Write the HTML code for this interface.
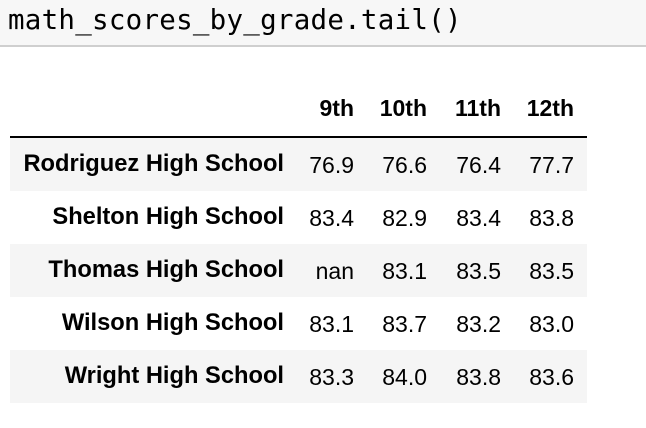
<!DOCTYPE html>
<html><head><meta charset="utf-8"><style>
body{margin:0;width:646px;height:428px;background:#fff;position:relative;overflow:hidden;font-family:"Liberation Sans",Arial,sans-serif;}
.code{position:absolute;left:0;top:0;width:646px;height:45px;background:#f7f7f7;border-bottom:2px solid #cfcfcf;}
.code span{position:absolute;left:8px;top:4px;font-family:"DejaVu Sans Mono","Liberation Mono",monospace;font-size:27.5px;letter-spacing:0.25px;color:#000;white-space:nowrap;line-height:32px;}
.row{position:absolute;left:10px;width:577px;height:53px;}
.g{background:#f5f5f5;}
.t{position:absolute;font-size:23px;line-height:23px;color:#000;white-space:nowrap;}
.b{font-weight:bold;font-size:23.7px;}
.hl{position:absolute;left:10px;top:136px;width:577px;height:2px;background:#000;}
</style></head><body>
<div class="code"><span>math_scores_by_grade.tail()</span></div>

<div class="t b" style="right:292px;top:97px;font-size:23px">9th</div>
<div class="t b" style="right:219px;top:97px;font-size:23px">10th</div>
<div class="t b" style="right:145px;top:97px;font-size:23px">11th</div>
<div class="t b" style="right:72px;top:97px;font-size:23px">12th</div>
<div class="hl"></div>

<div class="row g" style="top:138px"></div>
<div class="row" style="top:191px"></div>
<div class="row g" style="top:244px"></div>
<div class="row" style="top:297px"></div>
<div class="row g" style="top:350px"></div>

<div class="t b" style="right:362px;top:153px;">Rodriguez High School</div>
<div class="t" style="right:292px;top:154px;">76.9</div>
<div class="t" style="right:219px;top:154px;">76.6</div>
<div class="t" style="right:145px;top:154px;">76.4</div>
<div class="t" style="right:72px;top:154px;">77.7</div>

<div class="t b" style="right:362px;top:206px;">Shelton High School</div>
<div class="t" style="right:292px;top:207px;">83.4</div>
<div class="t" style="right:219px;top:207px;">82.9</div>
<div class="t" style="right:145px;top:207px;">83.4</div>
<div class="t" style="right:72px;top:207px;">83.8</div>

<div class="t b" style="right:362px;top:259px;">Thomas High School</div>
<div class="t" style="right:292px;top:260px;">nan</div>
<div class="t" style="right:219px;top:260px;">83.1</div>
<div class="t" style="right:145px;top:260px;">83.5</div>
<div class="t" style="right:72px;top:260px;">83.5</div>

<div class="t b" style="right:362px;top:312px;">Wilson High School</div>
<div class="t" style="right:292px;top:313px;">83.1</div>
<div class="t" style="right:219px;top:313px;">83.7</div>
<div class="t" style="right:145px;top:313px;">83.2</div>
<div class="t" style="right:72px;top:313px;">83.0</div>

<div class="t b" style="right:362px;top:365px;">Wright High School</div>
<div class="t" style="right:292px;top:366px;">83.3</div>
<div class="t" style="right:219px;top:366px;">84.0</div>
<div class="t" style="right:145px;top:366px;">83.8</div>
<div class="t" style="right:72px;top:366px;">83.6</div>
</body></html>
